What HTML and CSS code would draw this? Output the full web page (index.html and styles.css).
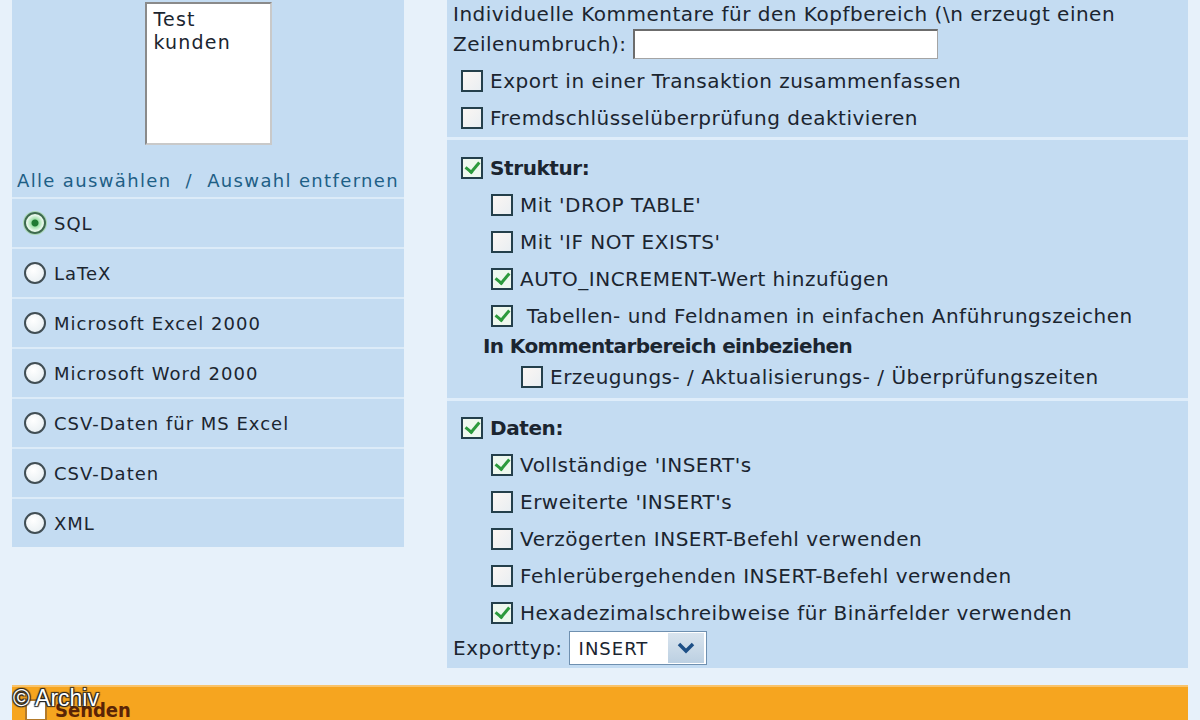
FILE: index.html
```html
<!DOCTYPE html>
<html lang="de">
<head>
    <meta charset="UTF-8">
    <title>Exportieren</title>
    <link rel="stylesheet" href="styles.css">
</head>
<body>
    <div class="cols">
        <div class="left">
            <div class="tables">
                <div class="listbox">
                    <div>Test</div>
                    <div>kunden</div>
                </div>
            </div>
            <div class="selall"><a href="#">Alle auswählen</a>&nbsp; / &nbsp;<a href="#">Auswahl entfernen</a></div>
            <div class="fmt"><span class="radio on"></span>SQL</div>
            <div class="fmt"><span class="radio"></span>LaTeX</div>
            <div class="fmt"><span class="radio"></span>Microsoft Excel 2000</div>
            <div class="fmt"><span class="radio"></span>Microsoft Word 2000</div>
            <div class="fmt"><span class="radio"></span>CSV-Daten für MS Excel</div>
            <div class="fmt"><span class="radio"></span>CSV-Daten</div>
            <div class="fmt"><span class="radio"></span>XML</div>
        </div>

        <div class="right">
            <div class="sec s1">
                <div class="txt">Individuelle Kommentare für den Kopfbereich (\n erzeugt einen</div>
                <div class="txt2">Zeilenumbruch):<span class="field"></span></div>
                <div class="row l0 first"><span class="cb"></span>Export in einer Transaktion zusammenfassen</div>
                <div class="row l0"><span class="cb"></span>Fremdschlüsselüberprüfung deaktivieren</div>
            </div>
            <div class="sec s2">
                <div class="row l0"><span class="cb on"></span><b>Struktur:</b></div>
                <div class="row l1"><span class="cb"></span>Mit 'DROP TABLE'</div>
                <div class="row l1"><span class="cb"></span>Mit 'IF NOT EXISTS'</div>
                <div class="row l1"><span class="cb on"></span>AUTO_INCREMENT-Wert hinzufügen</div>
                <div class="row l1"><span class="cb on"></span>&nbsp;Tabellen- und Feldnamen in einfachen Anführungszeichen</div>
                <div class="head">In Kommentarbereich einbeziehen</div>
                <div class="row l2"><span class="cb"></span>Erzeugungs- / Aktualisierungs- / Überprüfungszeiten</div>
            </div>
            <div class="sec s3">
                <div class="row l0"><span class="cb on"></span><b>Daten:</b></div>
                <div class="row l1"><span class="cb on"></span>Vollständige 'INSERT's</div>
                <div class="row l1"><span class="cb"></span>Erweiterte 'INSERT's</div>
                <div class="row l1"><span class="cb"></span>Verzögerten INSERT-Befehl verwenden</div>
                <div class="row l1"><span class="cb"></span>Fehlerübergehenden INSERT-Befehl verwenden</div>
                <div class="row l1"><span class="cb on"></span>Hexadezimalschreibweise für Binärfelder verwenden</div>
                <div class="exp">Exporttyp:
                    <span class="dd"><span class="val">INSERT</span><span class="arrow"><svg width="18" height="12" viewBox="0 0 18 12"><path d="M2 2 L9 9 L16 2" fill="none" stroke="#1d4f86" stroke-width="3.5"/></svg></span></span>
                </div>
            </div>
        </div>
    </div>

    <div class="submit">
        <span class="cb white"></span><b>Senden</b>
        <span class="mark">© Archiv</span>
    </div>
</body>
</html>
```

FILE: styles.css
```css
/* phpMyAdmin Export - Formate links, Optionen rechts */
body {
    margin: 0; background: #e7f1fa;
    font-family: "DejaVu Sans", Verdana, sans-serif; color: #1b2530;
    width: 1200px; height: 720px; overflow: hidden;
}
.cols {display: flex; align-items: flex-start; height: 668px; margin-bottom: 17px;}

.left {
    margin-left: 12px; width: 392px;
    background: #c4dcf2;
    font-size: 18px; letter-spacing: 1px;
}
.tables {padding-top: 2px; display: flex; justify-content: center;}
.listbox {
    width: 127px; height: 143px; box-sizing: border-box;
    background: #fff; border: 2px solid #8a8a8a; border-right-color: #c9c9c9; border-bottom-color: #c9c9c9;
    padding: 4px 7px; line-height: 23px; font-size: 19px; letter-spacing: 1.2px;
}
.selall {padding: 26px 0 6px; line-height: 20px; text-align: center; color: #1e5f86; font-size: 18px; letter-spacing: 1.35px; white-space: nowrap;}
.selall a {color: #1e5f86; text-decoration: none;}
.fmt {
    border-top: 2px solid #dcebf8; height: 48px;
    display: flex; align-items: center; padding-left: 12px;
}
.radio {
    width: 22px; height: 22px; box-sizing: border-box; border-radius: 50%;
    border: 2px solid #414e54; margin-right: 8px;
    background: radial-gradient(circle at 40% 35%, #fff, #e4ecf0);
}
.radio.on {
    border-color: #3e6b4d;
    background: radial-gradient(circle, #1f7a31 0 3px, #9fe0a8 4px, #e9f8ec 8px);
    box-shadow: 0 0 0 1px #a9d8b2;
}

.right {
    margin-left: 43px; width: 741px;
    background: #c4dcf2;
    font-family: "DejaVu Sans", Tahoma, sans-serif; font-size: 20px; letter-spacing: 0.5px;
}
.sec {padding-left: 6px;}
.sec + .sec {border-top: 3px solid #dfedfa;}
.s1 {padding-bottom: 1px;}
.s2 {padding-top: 9px; padding-bottom: 3px;}
.s3 {padding-top: 8px; padding-bottom: 3px;}
.txt {line-height: 29px; white-space: nowrap;}
.txt2 {height: 30px; display: flex; align-items: center;}
.field {
    width: 305px; height: 30px; box-sizing: border-box; margin-left: 6px;
    background: #fff; border: 1px solid #a4a4a4; border-top: 2px solid #6c6c6c; border-left: 2px solid #6c6c6c;
}
.row {height: 37px; display: flex; align-items: center; white-space: nowrap;}
.row.first {margin-top: 3px;}
.l0 {padding-left: 8px;}
.l1 {padding-left: 38px;}
.l2 {padding-left: 68px;}
.head {height: 24px; line-height: 24px; padding-left: 30px; font-weight: bold; letter-spacing: -0.6px;}
.row b {letter-spacing: -0.4px;}
.cb {
    width: 22px; height: 22px; box-sizing: border-box; flex: none;
    border: 2px solid #243f4b; margin-right: 7px;
    background: linear-gradient(135deg, #fbf6f3, #e9eef2);
    display: inline-flex; align-items: center; justify-content: center;
}
.cb.on {background: #eef8ee;}
.cb.on::after {
    content: ""; width: 6px; height: 11px; margin-top: -3px;
    border: solid #2c9a3c; border-width: 0 3px 3px 0;
    transform: rotate(40deg);
}
.exp {height: 34px; display: flex; align-items: center;}
.dd {
    margin-left: 6px; width: 138px; height: 34px; box-sizing: border-box;
    background: #fff; border: 1px solid #6f90b0;
    display: flex; align-items: center; justify-content: space-between;
    font-family: "DejaVu Sans", Verdana, sans-serif; font-size: 18px;
}
.val {padding-left: 9px; letter-spacing: 1px;}
.arrow {
    width: 36px; height: 30px; margin-right: 2px;
    background: linear-gradient(#d9e4ee, #bcd0e2);
    display: flex; align-items: center; justify-content: center;
}

.submit {
    position: relative;
    margin-left: 12px; width: 1176px; height: 35px; box-sizing: border-box;
    background: #f6a51f; border-top: 2px solid #f9c36a;
    display: flex; align-items: flex-start; padding: 12px 0 0 13px;
    font-family: "DejaVu Sans Condensed", "DejaVu Sans", Tahoma, sans-serif; font-size: 20px;
}
.submit b {color: #5a2406; line-height: 22px;}
.cb.white {background: #fff; border-color: #b37a2a; margin-right: 8px;}
.mark {
    position: absolute; left: 1px; top: -2px;
    font-family: "Liberation Sans", Arial, sans-serif; font-size: 23px; color: #fff;
    text-shadow: 1px 1px 1px #222, -1px -1px 1px #222, 1px -1px 1px #222, -1px 1px 1px #222;
}
```
